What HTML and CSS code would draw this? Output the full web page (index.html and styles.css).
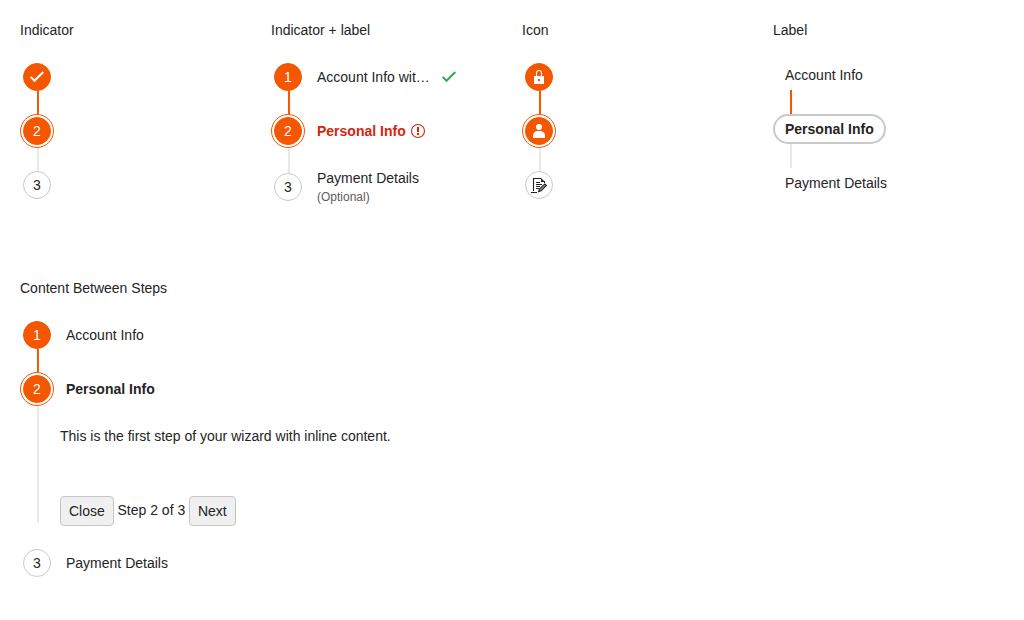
FILE: index.html
```html
<!DOCTYPE html>
<html lang="en">
<head>
<meta charset="utf-8">
<title>Train</title>
<link rel="stylesheet" href="styles.css">
</head>
<body>
<main class="page">
  <div class="columns">
    <section class="column">
      <h2 class="title">Indicator</h2>
      <div class="train">
        <div class="step"><span class="node visited"><svg class="icon" viewBox="0 0 16 16"><path d="M1.6 7.9l3.9 3.9 8.8-8.8" fill="none" stroke="#fff" stroke-width="2"/></svg></span></div>
        <div class="line done"></div>
        <div class="step"><span class="ring"><span class="node visited">2</span></span></div>
        <div class="line"></div>
        <div class="step"><span class="node">3</span></div>
      </div>
    </section>
    <section class="column">
      <h2 class="title">Indicator + label</h2>
      <div class="train">
        <div class="step"><span class="node visited">1</span><span class="label truncated">Account Info wit…</span><svg class="icon valid" viewBox="0 0 16 16"><path d="M1.6 7.9l3.9 3.9 8.8-8.8" fill="none" stroke="#3ba550" stroke-width="2"/></svg></div>
        <div class="line done"></div>
        <div class="step"><span class="ring"><span class="node visited">2</span></span><span class="label current error">Personal Info</span><svg class="icon invalid" viewBox="0 0 16 16"><circle cx="8" cy="8" r="6.5" fill="none" stroke="#d9230b" stroke-width="1.1"/><path d="M7 4h2v5H7zM7 10h2v2H7z" fill="#d9230b"/></svg></div>
        <div class="line longer"></div>
        <div class="step"><span class="node">3</span><span class="label stacked">Payment Details<small class="hint">(Optional)</small></span></div>
      </div>
    </section>
    <section class="column">
      <h2 class="title">Icon</h2>
      <div class="train">
        <div class="step"><span class="node visited"><svg class="icon" viewBox="0 0 16 16"><path d="M5.5 7V4a2.5 2.5 0 0 1 5 0v3" fill="none" stroke="#fff" stroke-width="1.1"/><path d="M3 7h10v8H3zM7 10v2h2v-2z" fill="#fff" fill-rule="evenodd"/></svg></span></div>
        <div class="line done"></div>
        <div class="step"><span class="ring"><span class="node visited"><svg class="icon" viewBox="0 0 16 16"><circle cx="8" cy="4" r="3" fill="#fff"/><path d="M2 15v-2c0-3 2-5 5-5h2c3 0 5 2 5 5v2z" fill="#fff"/></svg></span></span></div>
        <div class="line"></div>
        <div class="step"><span class="node"><svg class="icon" viewBox="0 0 16 16"><path d="M2.5 14V1.5H10M13.5 4v2M0 15.5h6" fill="none" stroke="#222" stroke-width="1.1"/><path d="M10 1l4 4h-4z" fill="#222"/><path d="M5 5.5h4M5 7.5h6M5 9.5h4M5 11.5h3" stroke="#222"/><path d="M7.6 14.6l.8-2.5 5.4-5.2 1.6 1.6-5.4 5.3z" fill="#999" stroke="#222" stroke-width="1.1"/></svg></span></div>
      </div>
    </section>
    <section class="column">
      <h2 class="title">Label</h2>
      <div class="train labels">
        <div class="text-step">Account Info</div>
        <div class="line done"></div>
        <div class="text-step selected">Personal Info</div>
        <div class="line"></div>
        <div class="text-step">Payment Details</div>
      </div>
    </section>
  </div>
  <section class="between">
    <h2 class="title">Content Between Steps</h2>
    <div class="train">
      <div class="step"><span class="node visited">1</span><span class="label">Account Info</span></div>
      <div class="line done"></div>
      <div class="step"><span class="ring"><span class="node visited">2</span></span><span class="label current">Personal Info</span></div>
      <div class="content">
        <div class="line tall"></div>
        <div class="panel">
          <p class="message">This is the first step of your wizard with inline content.</p>
          <div class="actions"><button class="button">Close</button><span class="progress">Step 2 of 3</span><button class="button">Next</button></div>
        </div>
      </div>
      <div class="step"><span class="node">3</span><span class="label">Payment Details</span></div>
    </div>
  </section>
</main>
</body>
</html>
```
FILE: styles.css
```css
* { box-sizing: border-box; }
body { margin: 0; background: #fff; color: #242424; font: 14px/20px "Liberation Sans", Arial, sans-serif; }
.page { padding: 20px; }
.columns { display: grid; grid-template-columns: repeat(4, 251px); width: 1004px; height: 258px; align-items: start; }
.title { margin: 0 0 23px; font-size: 14px; line-height: 20px; font-weight: 400; }
.step { display: flex; align-items: center; }
.node { display: flex; align-items: center; justify-content: center; flex: none; width: 28px; height: 28px; margin-left: 3px; border: 1px solid #c9c9c9; border-radius: 50%; background: #fff; }
.node.visited { border-color: #f55600; background: #f55600; color: #fff; }
.ring { flex: none; width: 34px; height: 34px; padding: 2px; border: 1px solid #f55600; border-radius: 50%; background: #fff; }
.ring .node { margin: 0; }
.line { width: 2px; height: 23px; margin-left: 17px; background: #e8e8e8; }
.line.done { background: #f55600; }
.line.longer { height: 25px; }
.label { margin-left: 12px; }
.node + .label { margin-left: 15px; }
.label.current { font-weight: 700; }
.label.error { color: #d9230b; }
.label.truncated { width: 115px; white-space: nowrap; }
.label.stacked { display: flex; flex-direction: column; height: 38px; margin-top: -5px; margin-bottom: -5px; }
.hint { font-size: 12px; line-height: 18px; color: #5c5c5c; }
.icon { display: block; flex: none; width: 16px; height: 16px; }
.valid { margin-left: 9px; }
.invalid { margin-left: 4px; }
.labels { margin-top: -1px; }
.text-step { width: fit-content; height: 28px; padding: 0 12px; line-height: 26px; }
.text-step.selected { height: 30px; padding: 0 10px; border: 2px solid #c9c9c9; border-radius: 15px; font-weight: 700; }
.labels .line { height: 24px; }
.labels .text-step:last-child { padding-top: 2px; }
.content { display: flex; margin-bottom: 23px; }
.line.tall { height: 117px; }
.panel { margin-left: 21px; padding-top: 20px; }
.message { margin: 0 0 50px; }
.actions { display: flex; gap: 3.7px; height: 30px; }
.progress { line-height: 28px; }
.button { height: 30px; padding: 0 8px; border: 1px solid #c5c5c5; border-radius: 4px; background: #f0f0f0; color: #242424; font: inherit; }
```
